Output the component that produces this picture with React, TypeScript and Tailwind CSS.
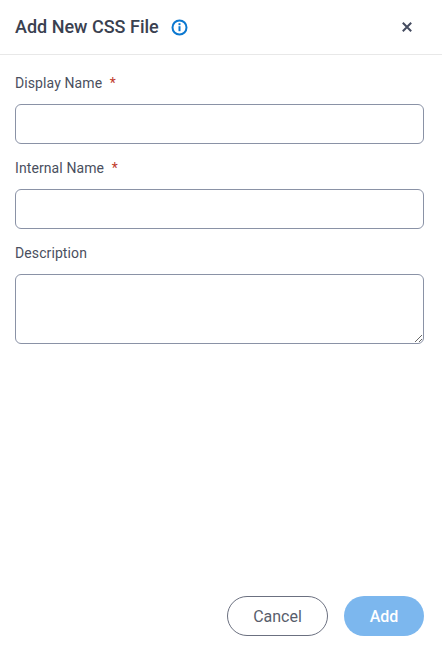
export default function App() {
    const fieldClass = 'block w-full h-10 rounded-md border border-[#8a92a6] bg-white px-3 outline-none';

    return (
        <div className="flex flex-col h-[650px] w-[442px] bg-white font-['Roboto',sans-serif] overflow-hidden">
            <div className="flex items-center justify-between h-[55px] pl-[15px] pr-[30px] border-b border-[#e8e8e8]">
                <div className="flex items-center gap-[12px]">
                    <h1 className="text-[18px] leading-[24px] font-medium text-[#3a4150]">Add New CSS File</h1>
                    <svg width="17" height="17" viewBox="0 0 17 17" fill="none">
                        <circle cx="8.5" cy="8.5" r="7" stroke="#0b78d0" strokeWidth="2" />
                        <rect x="7.5" y="7.2" width="2" height="5" fill="#0b78d0" />
                        <rect x="7.5" y="4.2" width="2" height="2" fill="#0b78d0" />
                    </svg>
                </div>
                <svg width="10" height="10" viewBox="0 0 10 10" fill="none">
                    <path d="M0.8 0.8L9.2 9.2M9.2 0.8L0.8 9.2" stroke="#454c60" strokeWidth="2" />
                </svg>
            </div>

            <div className="flex flex-col flex-1 px-[15px] pr-[18px] pt-[19px]">
                <label className="block text-[14px] leading-[18px] tracking-[0.1px] text-[#4a4f5e] mb-[12px]">
                    Display Name <span className="text-[#c0392b] ml-[4px]">*</span>
                </label>
                <input className={fieldClass} />

                <label className="block text-[14px] leading-[18px] tracking-[0.1px] text-[#4a4f5e] mt-[15px] mb-[12px]">
                    Internal Name <span className="text-[#c0392b] ml-[4px]">*</span>
                </label>
                <input className={fieldClass} />

                <label className="block text-[14px] leading-[18px] tracking-[0.1px] text-[#4a4f5e] mt-[15px] mb-[12px]">
                    Description
                </label>
                <textarea className="block w-full h-[70px] rounded-md border border-[#8a92a6] bg-white px-3 py-2 outline-none" />
            </div>

            <div className="flex justify-end gap-4 pr-[18px] pb-[14px]">
                <button className="w-[101px] h-10 pt-[2px] rounded-full border border-[#6b7080] bg-white text-[16px] text-[#585e6c]">
                    Cancel
                </button>
                <button className="w-20 h-10 pt-[2px] rounded-full bg-[#7cb7ee] text-[16px] font-medium text-white">
                    Add
                </button>
            </div>
        </div>
    );
}
